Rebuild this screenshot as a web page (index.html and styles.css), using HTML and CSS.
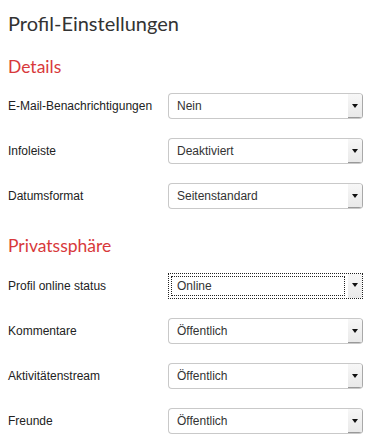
FILE: index.html
```html
<!DOCTYPE html>
<html lang="de">
<head>
  <meta charset="UTF-8" />
  <title>Profil-Einstellungen</title>
  <link rel="stylesheet" href="styles.css">
</head>
<body>
  <h1>Profil-Einstellungen</h1>

  <!-- Details -->
  <h2>Details</h2>
  <div class="rows">
    <div class="row">
      <div class="label">E-Mail-Benachrichtigungen</div>
      <div class="select"><span class="value">Nein</span><span class="arrow"></span></div>
    </div>
    <div class="row">
      <div class="label">Infoleiste</div>
      <div class="select"><span class="value">Deaktiviert</span><span class="arrow"></span></div>
    </div>
    <div class="row">
      <div class="label">Datumsformat</div>
      <div class="select"><span class="value">Seitenstandard</span><span class="arrow"></span></div>
    </div>
  </div>

  <!-- Privatssphäre -->
  <h2 class="second">Privatssphäre</h2>
  <div class="rows tight">
    <div class="row">
      <div class="label">Profil online status</div>
      <div class="select focused"><span class="value">Online</span><span class="arrow"></span></div>
    </div>
    <div class="row">
      <div class="label">Kommentare</div>
      <div class="select"><span class="value">Öffentlich</span><span class="arrow"></span></div>
    </div>
    <div class="row">
      <div class="label">Aktivitätenstream</div>
      <div class="select"><span class="value">Öffentlich</span><span class="arrow"></span></div>
    </div>
    <div class="row">
      <div class="label">Freunde</div>
      <div class="select"><span class="value">Öffentlich</span><span class="arrow"></span></div>
    </div>
  </div>
</body>
</html>
```

FILE: styles.css
```css
:root {
  --red: #d8393b;
  --text: #222;
  --border: #c9c9c9;
}
* { box-sizing: border-box; }
body {
  margin: 0;
  padding: 8px 8px 0;
  background: #fff;
  font-family: "Liberation Sans", Arial, sans-serif;
  font-size: 12px;
  color: var(--text);
}

/* ===== Headings ===== */
h1 { font-family: Lato, sans-serif; font-weight: 400; font-size: 20px; line-height: 26px; color: #333; margin: 2px 0 0; }
h2 { font-family: Lato, sans-serif; font-weight: 400; font-size: 17.5px; line-height: 22px; color: var(--red); margin: 20px 0 0; }
h2.second { margin-top: 26px; }

/* ===== Rows ===== */
.rows { display: flex; flex-direction: column; gap: 19px; margin-top: 15px; }
.rows.tight { gap: 19px; margin-top: 16px; }
.row { display: grid; grid-template-columns: 160px 195px; align-items: center; }
.label { line-height: 16px; }

/* ===== Select ===== */
.select {
  display: flex; height: 26px;
  border: 1px solid var(--border); border-right-color: #a9a9a9;
  border-radius: 4px; background: #fff; overflow: hidden;
}
.select .value { flex: 1; padding-left: 8px; line-height: 24px; color: #333; }
.select .arrow {
  width: 14px; position: relative;
  background: linear-gradient(#f7f7f7, #e9e9e9);
  border-bottom: 1px solid #999;
}
.select .arrow::after {
  content: ""; position: absolute; left: 4px; top: 10px;
  border-left: 3px solid transparent; border-right: 3px solid transparent; border-top: 4px solid #111;
}

/* focus-Rahmen */
.select.focused { border: 1px dotted #222; border-radius: 0; padding: 2px 0 2px 2px; }
.select.focused .value { border: 1px dotted #222; line-height: 18px; padding-left: 5px; }
.select.focused .arrow { margin: -2px 0 -2px 3px; border-bottom: none; }
.select.focused .arrow::after { top: 9px; }
```
